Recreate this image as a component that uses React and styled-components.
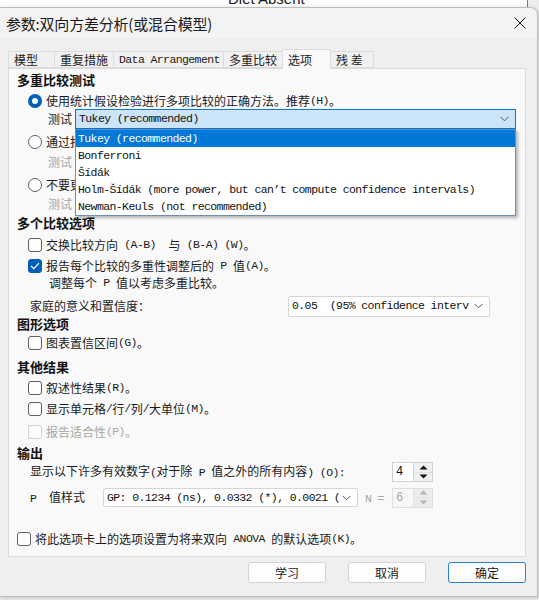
import React from "react";
import styled, { createGlobalStyle, css } from "styled-components";

const cjk = `"Noto Sans CJK SC", "Noto Sans", sans-serif`;
const mono = `"Liberation Mono", "Noto Sans CJK SC", monospace`;

const monoText = css`
  font-family: ${mono};
  font-size: 11.5px;
  letter-spacing: -0.6px;
`;

const GlobalStyle = createGlobalStyle`
  html, body {
    margin: 0;
    padding: 0;
    background: #f4f4f4;
  }
  * {
    box-sizing: border-box;
  }
`;

const Screen = styled.div`
  width: 539px;
  height: 600px;
  overflow: hidden;
  display: flex;
  flex-direction: column;
  background: #ededed;
`;

const BackStrip = styled.div`
  height: 7px;
  overflow: hidden;
  background: #fdfdfd;
  width: 528px;
  border-right: 1px solid #7a7a7a;
`;

const BackTitle = styled.div`
  margin-top: -9px;
  padding-left: 228px;
  font-family: "Liberation Sans", sans-serif;
  font-size: 15px;
  line-height: 16px;
  color: #1a1a1a;
`;

const Dialog = styled.div`
  width: 538px;
  height: 590px;
  background: #efefef;
  border: 1px solid #bdbdbd;
  border-left: none;
  border-radius: 0 8px 0 0;
  box-shadow: 1px 1px 4px rgba(0, 0, 0, 0.18);
  display: flex;
  flex-direction: column;
  overflow: hidden;
`;

const TitleBar = styled.div`
  height: 30px;
  flex: 0 0 auto;
  display: flex;
  align-items: center;
  justify-content: space-between;
  padding: 0 11px 0 6px;
  background: #f3f3f3;
`;

const Title = styled.div`
  font-family: ${cjk};
  font-size: 15px;
  color: #1a1a1a;
  letter-spacing: -0.2px;
`;

const Body = styled.div`
  flex: 1;
  display: flex;
  flex-direction: column;
  padding: 11px 11px 0 8px;
`;

const TabRow = styled.div`
  display: flex;
  align-items: flex-end;
  height: 19px;
  padding-left: 1px;
`;

const Tab = styled.div`
  width: ${(p) => p.$w}px;
  height: 17px;
  padding-left: 5px;
  display: flex;
  align-items: center;
  font-family: ${cjk};
  font-size: 12px;
  ${(p) => p.$latin && monoText}
  color: #222;
  background: ${(p) => (p.$active ? "#f9f9f9" : "#f0f0f0")};
  border: 1px solid #dcdcdc;
  border-bottom: ${(p) => (p.$active ? "none" : "1px solid #dcdcdc")};
  margin-left: -1px;
  position: relative;
  z-index: ${(p) => (p.$active ? 2 : 1)};
  ${(p) => p.$active && css`margin-bottom: -1px; height: 20px;`}
`;

const Panel = styled.div`
  width: 518px;
  height: 489px;
  background: #f9f9f9;
  border: 1px solid #dcdcdc;
  padding: 0 0 0 8px;
  display: flex;
  flex-direction: column;
`;

const Row = styled.div`
  display: flex;
  align-items: center;
  height: ${(p) => p.$h || 16}px;
  margin-top: ${(p) => p.$mt || 0}px;
  padding-left: ${(p) => p.$indent || 0}px;
  font-family: ${cjk};
  font-size: 12px;
  line-height: 16px;
  color: ${(p) => (p.$muted ? "#a5a5a5" : "#1a1a1a")};
  white-space: pre;
  position: relative;
`;

const Heading = styled(Row)`
  font-size: 13px;
  font-weight: 700;
  color: #111;
`;

const Label = styled.span`
  flex: 0 0 ${(p) => p.$w}px;
  white-space: pre;
  color: ${(p) => (p.$muted ? "#a5a5a5" : "inherit")};
`;

const Mono = styled.span`
  ${monoText}
`;

const Box = styled.span`
  width: 14px;
  height: 14px;
  flex: 0 0 14px;
  margin-right: 4px;
  border-radius: 3px;
  border: 1px solid ${(p) => (p.$disabled ? "#cfcfcf" : p.$on ? "#005fb8" : "#5f5f5f")};
  background: ${(p) => (p.$on ? "#005fb8" : "#fdfdfd")};
  display: flex;
  align-items: center;
  justify-content: center;
`;

const RadioDot = styled.span`
  width: 14px;
  height: 14px;
  flex: 0 0 14px;
  margin-right: 4px;
  border-radius: 50%;
  border: ${(p) => (p.$on ? "4px solid #005fb8" : "1px solid #5f5f5f")};
  background: #fff;
`;

const SelectBox = styled.div`
  position: relative;
  width: ${(p) => p.$w}px;
  height: ${(p) => p.$h || 20}px;
  display: flex;
  align-items: center;
  justify-content: space-between;
  padding: 0 6px 0 3px;
  ${monoText}
  color: #111;
  background: ${(p) => (p.$focus ? "#cce4f7" : "#ffffff")};
  border: 1px solid ${(p) => (p.$focus ? "#0078d4" : "#d6d6d6")};
  border-radius: ${(p) => (p.$focus ? 0 : 2)}px;
`;

const SelectText = styled.span`
  overflow: hidden;
  white-space: pre;
  flex: 1;
`;

const DropList = styled.div`
  position: absolute;
  top: calc(100% + 1px);
  left: -1px;
  right: -1px;
  height: 87px;
  background: #ffffff;
  border: 1px solid #6d8fb5;
  box-shadow: 2px 2px 3px rgba(0, 0, 0, 0.28);
  z-index: 10;
`;

const DropItem = styled.div`
  height: 17px;
  line-height: 17px;
  padding-left: 2px;
  ${monoText}
  white-space: pre;
  color: ${(p) => (p.$sel ? "#fff" : "#111")};
  background: ${(p) => (p.$sel ? "#0078d7" : "transparent")};
`;

const Spinner = styled.div`
  display: flex;
  height: 20px;
  width: 41px;
  border: 1px solid ${(p) => (p.$disabled ? "#dedede" : "#cfcfcf")};
  background: ${(p) => (p.$disabled ? "#f7f7f7" : "#fff")};
`;

const SpinValue = styled.span`
  flex: 1;
  padding-left: 3px;
  font-family: ${mono};
  font-size: 12px;
  line-height: 18px;
  color: ${(p) => (p.$disabled ? "#a8a8a8" : "#111")};
`;

const SpinArrows = styled.div`
  width: 19px;
  display: flex;
  flex-direction: column;
  border-left: 1px solid ${(p) => (p.$disabled ? "#e2e2e2" : "#d6d6d6")};
  background: ${(p) => (p.$disabled ? "#ececec" : "#f0f0f0")};
`;

const SpinBtn = styled.span`
  flex: 1;
  display: flex;
  align-items: center;
  justify-content: center;
  & + & {
    border-top: 1px solid ${(p) => (p.$disabled ? "#e2e2e2" : "#d6d6d6")};
  }
`;

const ButtonRow = styled.div`
  display: flex;
  justify-content: flex-end;
  gap: 22px;
  margin-top: 5px;
`;

const Button = styled.div`
  width: ${(p) => p.$w || 78}px;
  height: 21px;
  display: flex;
  align-items: center;
  justify-content: center;
  font-family: ${cjk};
  font-size: 12px;
  color: #1a1a1a;
  background: #fdfdfd;
  border: 1px solid ${(p) => (p.$primary ? "#2b7fd0" : "#d3d3d3")};
  border-radius: 3px;
`;

const Chevron = () => (
  <svg width="9" height="6" viewBox="0 0 9 6">
    <path d="M0.5 0.8 L4.5 4.8 L8.5 0.8" fill="none" stroke="#555" strokeWidth="1" />
  </svg>
);

const Tick = () => (
  <svg width="10" height="8" viewBox="0 0 10 8">
    <path d="M1 4 L3.8 6.6 L9 1.2" fill="none" stroke="#fff" strokeWidth="1.2" />
  </svg>
);

const Tri = ({ up, color }) => (
  <svg width="9" height="5" viewBox="0 0 9 5">
    <path d={up ? "M0.5 4.5 L4.5 0.5 L8.5 4.5 Z" : "M0.5 0.5 L4.5 4.5 L8.5 0.5 Z"} fill={color} />
  </svg>
);

// ASCII runs are drawn half-width (like the SimSun latin in the dialog)
function Mixed({ text }) {
  return text
    .split(/([\x20-\x7e]+)/)
    .filter(Boolean)
    .map((part, i) =>
      /^[\x20-\x7e]+$/.test(part) ? <Mono key={i}>{part}</Mono> : <span key={i}>{part}</span>
    );
}

function Check({ on, disabled, text, ...rest }) {
  return (
    <Row {...rest} $muted={disabled}>
      <Box $on={on} $disabled={disabled}>{on && <Tick />}</Box>
      <Mixed text={text} />
    </Row>
  );
}

function Radio({ on, text, ...rest }) {
  return (
    <Row {...rest}>
      <RadioDot $on={on} />
      <Mixed text={text} />
    </Row>
  );
}

function SpinBox({ value, disabled }) {
  const c = disabled ? "#b5b5b5" : "#111";
  return (
    <Spinner $disabled={disabled}>
      <SpinValue $disabled={disabled}>{value}</SpinValue>
      <SpinArrows $disabled={disabled}>
        <SpinBtn $disabled={disabled}><Tri up color={c} /></SpinBtn>
        <SpinBtn $disabled={disabled}><Tri color={c} /></SpinBtn>
      </SpinArrows>
    </Spinner>
  );
}

const tabs = [
  { label: "模型", w: 47 },
  { label: "重复措施", w: 60 },
  { label: "Data Arrangement", w: 111, latin: true },
  { label: "多重比较", w: 60 },
  { label: "选项", w: 49, active: true },
  { label: "残 差", w: 44 },
];

const tests = [
  "Tukey (recommended)",
  "Bonferroni",
  "Šídák",
  "Holm-Šídák (more power, but can’t compute confidence intervals)",
  "Newman-Keuls (not recommended)",
];

export default function App() {
  return (
    <>
      <GlobalStyle />
      <Screen>
        <BackStrip>
          <BackTitle>Diet Absent</BackTitle>
        </BackStrip>
        <Dialog>
          <TitleBar>
            <Title>参数:双向方差分析(或混合模型)</Title>
            <svg width="12" height="12" viewBox="0 0 12 12">
              <path d="M0.5 0.5 L11.5 11.5 M11.5 0.5 L0.5 11.5" stroke="#1a1a1a" strokeWidth="1" />
            </svg>
          </TitleBar>
          <Body>
            <TabRow>
              {tabs.map((t) => (
                <Tab key={t.label} $w={t.w} $active={t.active} $latin={t.latin}>
                  {t.label}
                </Tab>
              ))}
            </TabRow>
            <Panel>
              <Heading $mt={3}>多重比较测试</Heading>
              <Radio on $mt={5} $indent={11} text="使用统计假设检验进行多项比较的正确方法。推荐(H)。" />
              <Row $h={20} $indent={31}>
                <Label $w={27}>测试</Label>
                <SelectBox $w={441} $focus>
                  <SelectText>Tukey (recommended)</SelectText>
                  <Chevron />
                  <DropList>
                    {tests.map((t, i) => (
                      <DropItem key={t} $sel={i === 0}>{t}</DropItem>
                    ))}
                  </DropList>
                </SelectBox>
              </Row>
              <Radio $mt={5} $indent={11} text="通过报告置信区间进行比较(C)。" />
              <Row $h={20} $mt={2} $indent={31} $muted>
                <Label $w={27}>测试</Label>
              </Row>
              <Radio $mt={5} $indent={11} text="不要更正多重比较(N)。" />
              <Row $h={20} $mt={1} $indent={31} $muted>
                <Label $w={27}>测试</Label>
              </Row>

              <Heading $mt={1}>多个比较选项</Heading>
              <Check $mt={6} $indent={11} text="交换比较方向 (A-B)  与 (B-A) (W)。" />
              <Check on $mt={5} $indent={11} text="报告每个比较的多重性调整后的 P 值(A)。" />
              <Row $mt={1} $indent={32}>
                <Mixed text="调整每个 P 值以考虑多重比较。" />
              </Row>
              <Row $h={20} $mt={5} $indent={13}>
                <Label $w={258}>家庭的意义和置信度：</Label>
                <SelectBox $w={202} $h={21}>
                  <SelectText>0.05  (95% confidence interv</SelectText>
                  <Chevron />
                </SelectBox>
              </Row>

              <Heading>图形选项</Heading>
              <Check $mt={3} $indent={11} text="图表置信区间(G)。" />

              <Heading $mt={8}>其他结果</Heading>
              <Check $mt={5} $indent={11} text="叙述性结果(R)。" />
              <Check $mt={5} $indent={11} text="显示单元格/行/列/大单位(M)。" />
              <Check disabled $mt={7} $indent={11} text="报告适合性(P)。" />

              <Heading $mt={5}>输出</Heading>
              <Row $h={20} $mt={1} $indent={13}>
                <Label $w={362}>
                  <Mixed text="显示以下许多有效数字(对于除 P 值之外的所有内容) (O):" />
                </Label>
                <SpinBox value="4" />
              </Row>
              <Row $h={19} $mt={6} $indent={13}>
                <Label $w={73}>
                  <Mixed text="P  值样式" />
                </Label>
                <SelectBox $w={255} $h={19}>
                  <SelectText>GP: 0.1234 (ns), 0.0332 (*), 0.0021 (</SelectText>
                  <Chevron />
                </SelectBox>
                <Label $w={7} />
                <Label $w={27} $muted>
                  <Mono>N = </Mono>
                </Label>
                <SpinBox value="6" disabled />
              </Row>

              <Check $mt={24} text="将此选项卡上的选项设置为将来双向 ANOVA 的默认选项(K)。" />
            </Panel>
            <ButtonRow>
              <Button>学习</Button>
              <Button>取消</Button>
              <Button $primary>确定</Button>
            </ButtonRow>
          </Body>
        </Dialog>
      </Screen>
    </>
  );
}
